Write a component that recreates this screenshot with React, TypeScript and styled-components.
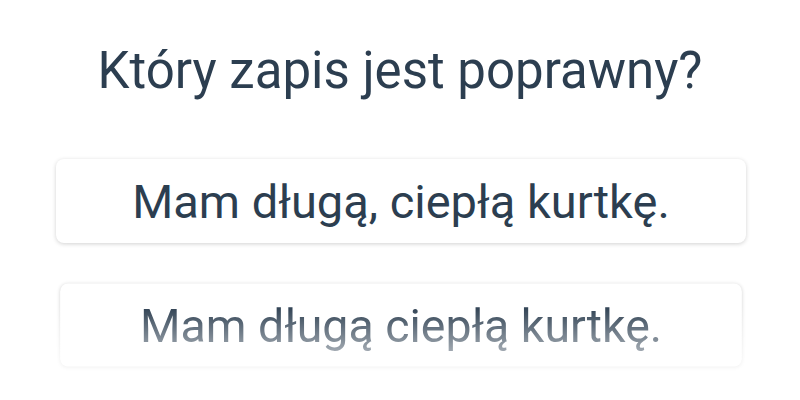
import { styled, createGlobalStyle } from "styled-components";

const Global = createGlobalStyle`
  html, body {
    margin: 0;
    padding: 0;
    background: #ffffff;
  }
  body {
    font-family: Roboto, "Noto Sans", "Liberation Sans", sans-serif;
    color: #2c3e50;
  }
`;

const options = [
  { text: "Mam długą, ciepłą kurtkę.", entering: false },
  { text: "Mam długą ciepłą kurtkę.", entering: true },
];

const App = () => {
  return (
    <Page>
      <Global />
      <Question>Który zapis jest poprawny?</Question>
      <Answers>
        {options.map((o) => (
          <Slot key={o.text} $entering={o.entering}>
            <Answer>{o.text}</Answer>
          </Slot>
        ))}
      </Answers>
    </Page>
  );
};

export default App;

const Page = styled.div`
  width: 800px;
  height: 400px;
  overflow: hidden;
  padding-top: 41px;
  box-sizing: border-box;
`;

const Question = styled.h1`
  margin: 0;
  font-size: 51px;
  font-weight: 400;
  line-height: 60px;
  text-align: center;
  color: #2c3e50;
`;

const Answers = styled.div`
  display: flex;
  flex-direction: column;
  gap: 40px;
  padding: 0 54px 0 56px;
  margin-top: 58px;
`;

/* wrapper carries the fade so the card's shadow stays inside the mask */
const Slot = styled.div<{ $entering: boolean }>`
  margin: -8px;
  padding: 8px;
  ${(p) =>
    p.$entering &&
    `
    transform: scale(0.988);
    -webkit-mask-image: linear-gradient(to bottom, #000 30%, rgba(0,0,0,0.22) 96%);
    mask-image: linear-gradient(to bottom, #000 30%, rgba(0,0,0,0.22) 96%);
  `}
`;

const Answer = styled.button`
  display: block;
  height: 84px;
  width: 100%;
  border: none;
  border-radius: 8px;
  background: #ffffff;
  box-shadow: 0 1px 4px rgba(0, 0, 0, 0.18);
  font-family: inherit;
  font-size: 47px;
  font-weight: 400;
  color: #2c3e50;
  padding: 0;
  cursor: pointer;
`;
